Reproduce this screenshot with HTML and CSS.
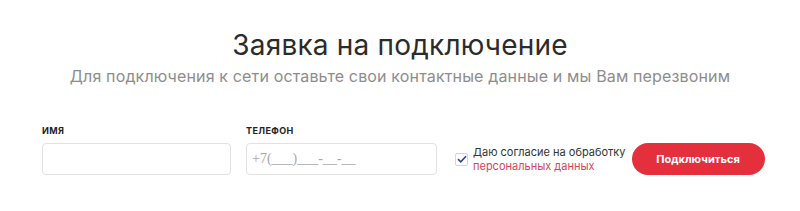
FILE: index.html
```
<!DOCTYPE html>
<html lang="ru">
<head>
<meta charset="utf-8">
<title>Заявка на подключение</title>
<link rel="stylesheet" href="styles.css">
</head>
<body>
<div class="request">
  <h1 class="request-title">Заявка на подключение</h1>
  <p class="request-sub">Для подключения к сети оставьте свои контактные данные и мы Вам перезвоним</p>
  <form class="request-form">
    <div class="field field-name">
      <label class="field-label">Имя</label>
      <input class="field-input" type="text">
    </div>
    <div class="field field-phone">
      <label class="field-label">Телефон</label>
      <input class="field-input phone" type="text" placeholder="+7(___)___-__-__">
    </div>
    <div class="agree">
      <span class="agree-box">
        <svg width="10" height="8" viewBox="0 0 10 8"><path d="M1 4.2 L3.8 6.8 L9 1.2" fill="none" stroke="#2c4a86" stroke-width="1.6"/></svg>
      </span>
      <span class="agree-text">Даю согласие на обработку<br><a href="#" class="agree-link">персональных данных</a></span>
    </div>
    <button class="submit" type="button">Подключиться</button>
  </form>
</div>
</body>
</html>
```
FILE: styles.css
```
body {
    margin: 0;
    background: #fff;
    font-family: "Inter", "Noto Sans", sans-serif;
}
.request {
    padding-top: 27px;
}
.request-title {
    margin: 0;
    text-align: center;
    font-weight: 400;
    font-size: 28px;
    line-height: 36px;
    color: #2b2b2b;
    letter-spacing: 0.2px;
}
.request-sub {
    margin: 3px 0 0;
    text-align: center;
    font-size: 16px;
    line-height: 20px;
    color: #8d8d8d;
    letter-spacing: 0.15px;
}
.request-form {
    display: flex;
    align-items: flex-end;
    padding: 0 0 0 42px;
    margin-top: 39px;
}
.field {
    display: flex;
    flex-direction: column;
}
.field-name {
    width: 189px;
}
.field-phone {
    width: 191px;
    margin-left: 15px;
}
.field-label {
    font-size: 9px;
    font-weight: 700;
    text-transform: uppercase;
    color: #222;
    letter-spacing: 0.4px;
    line-height: 12px;
    margin-bottom: 6px;
}
.field-input {
    box-sizing: border-box;
    height: 32px;
    border: 1px solid #e2e2e2;
    border-radius: 4px;
    padding: 0 5px;
    background: #fff;
    font-family: "Liberation Serif", "DejaVu Serif", serif;
    font-size: 14px;
}
.phone::placeholder {
    font-family: "Liberation Serif", "DejaVu Serif", serif;
    color: #a8a8a8;
}
.agree {
    display: flex;
    align-items: center;
    margin-left: 18px;
    height: 32px;
}
.agree-box {
    width: 13px;
    height: 13px;
    border: 1px solid #d6d6d6;
    border-radius: 2px;
    display: flex;
    align-items: center;
    justify-content: center;
    box-sizing: border-box;
}
.agree-text {
    margin-left: 5px;
    font-size: 11px;
    line-height: 14px;
    color: #333;
}
.agree-link {
    color: #d6475a;
    text-decoration: none;
}
.submit {
    margin-left: 6px;
    width: 133px;
    height: 32px;
    border: none;
    border-radius: 16px;
    background: #e3303c;
    color: #fff;
    font-family: inherit;
    font-weight: 700;
    font-size: 11px;
}
```
